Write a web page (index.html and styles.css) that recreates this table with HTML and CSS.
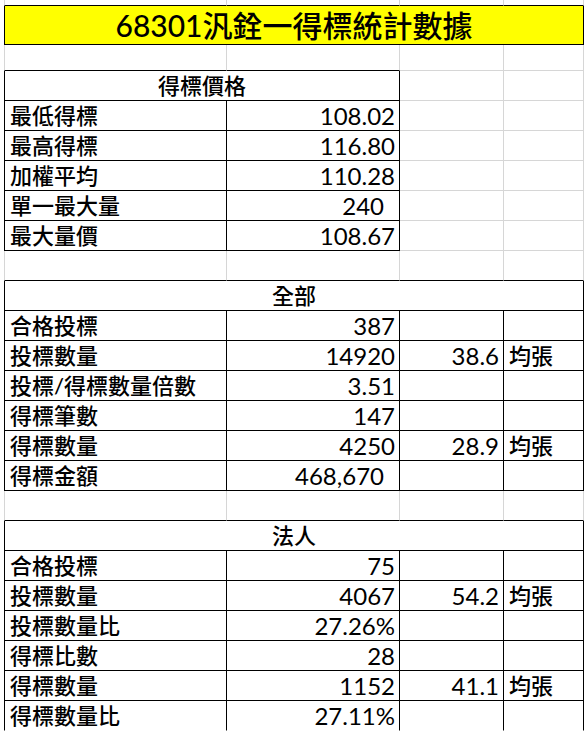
FILE: index.html
```html
<!DOCTYPE html>
<html lang="zh-Hant">
<head>
<meta charset="utf-8">
<title>68301汎銓一得標統計數據</title>
<link rel="stylesheet" href="styles.css">
</head>
<body>
<table class="sheet">
  <colgroup><col class="c-a"><col class="c-b"><col class="c-c"><col class="c-d"></colgroup>
  <tr class="r-top"><td class="bb"></td><td class="bb"></td><td class="bb"></td><td class="bb"></td></tr>
  <tr class="r-title"><td colspan="4" class="box title">68301汎銓一得標統計數據</td></tr>
  <tr class="r-gap"><td class="bb"></td><td class="bb"></td><td></td><td></td></tr>
  <tr><td colspan="2" class="box head">得標價格</td><td></td><td></td></tr>
  <tr><td class="box lbl">最低得標</td><td class="box num">108.02</td><td></td><td></td></tr>
  <tr><td class="box lbl">最高得標</td><td class="box num">116.80</td><td></td><td></td></tr>
  <tr><td class="box lbl">加權平均</td><td class="box num">110.28</td><td></td><td></td></tr>
  <tr><td class="box lbl">單一最大量</td><td class="box num acc">240</td><td></td><td></td></tr>
  <tr><td class="box lbl">最大量價</td><td class="box num">108.67</td><td></td><td></td></tr>
  <tr><td class="bb"></td><td class="bb"></td><td class="bb"></td><td class="bb"></td></tr>
  <tr><td colspan="4" class="box head">全部</td></tr>
  <tr><td class="box lbl">合格投標</td><td class="box num">387</td><td class="box"></td><td class="box"></td></tr>
  <tr><td class="box lbl">投標數量</td><td class="box num">14920</td><td class="box num">38.6</td><td class="box unit">均張</td></tr>
  <tr><td class="box lbl">投標/得標數量倍數</td><td class="box num">3.51</td><td class="box"></td><td class="box"></td></tr>
  <tr><td class="box lbl">得標筆數</td><td class="box num">147</td><td class="box"></td><td class="box"></td></tr>
  <tr><td class="box lbl">得標數量</td><td class="box num">4250</td><td class="box num">28.9</td><td class="box unit">均張</td></tr>
  <tr><td class="box lbl">得標金額</td><td class="box num acc">468,670</td><td class="box"></td><td class="box"></td></tr>
  <tr><td class="bb"></td><td class="bb"></td><td class="bb"></td><td class="bb"></td></tr>
  <tr><td colspan="4" class="box head">法人</td></tr>
  <tr><td class="box lbl">合格投標</td><td class="box num">75</td><td class="box"></td><td class="box"></td></tr>
  <tr><td class="box lbl">投標數量</td><td class="box num">4067</td><td class="box num">54.2</td><td class="box unit">均張</td></tr>
  <tr><td class="box lbl">投標數量比</td><td class="box num">27.26%</td><td class="box"></td><td class="box"></td></tr>
  <tr><td class="box lbl">得標比數</td><td class="box num">28</td><td class="box"></td><td class="box"></td></tr>
  <tr><td class="box lbl">得標數量</td><td class="box num">1152</td><td class="box num">41.1</td><td class="box unit">均張</td></tr>
  <tr class="r-last"><td class="box lbl">得標數量比</td><td class="box num">27.11%</td><td class="box"></td><td class="box"></td></tr>
</table>
</body>
</html>
```
FILE: styles.css
```css
html, body {
  margin: 0;
  padding: 0;
  background: #ffffff;
}

body {
  font-family: Lato, "Noto Sans CJK TC", sans-serif;
  color: #000;
}

.sheet {
  margin-left: 4px;
  border-collapse: separate;
  border-spacing: 0;
  table-layout: fixed;
  width: 580px;
}

.c-a { width: 223px; }
.c-b { width: 173px; }
.c-c { width: 104px; }
.c-d { width: 80px; }

.sheet td {
  box-sizing: border-box;
  height: 30px;
  padding: 0 4px 0 5px;
  border-right: 1px solid #d6d6d6;
  border-bottom: 1px solid #d6d6d6;
  font-size: 22px;
  line-height: 29px;
  font-weight: 500;
  white-space: nowrap;
  vertical-align: middle;
}

.sheet td:first-child {
  border-left: 1px solid #d6d6d6;
}

.sheet td.bb {
  border-bottom-color: #000;
}

.sheet td.box {
  border-right-color: #000;
  border-bottom-color: #000;
}

.sheet td.box:first-child {
  border-left-color: #000;
}

.r-top td {
  height: 6px;
  line-height: 0;
}

.r-title td {
  height: 39px;
}

.r-gap td {
  height: 26px;
}

.sheet td.title {
  background: #ffff00;
  font-size: 30px;
  line-height: 38px;
  text-align: center;
  padding: 0;
}

.sheet td.head {
  text-align: center;
  padding: 0;
}

.sheet td.num {
  font-size: 24px;
  font-weight: 400;
  text-align: right;
  padding-right: 4px;
}

.sheet td.num.acc {
  padding-right: 15px;
}

.sheet td.unit {
  padding-left: 5px;
}

.r-last td.box {
  border-bottom-color: transparent;
}
```
